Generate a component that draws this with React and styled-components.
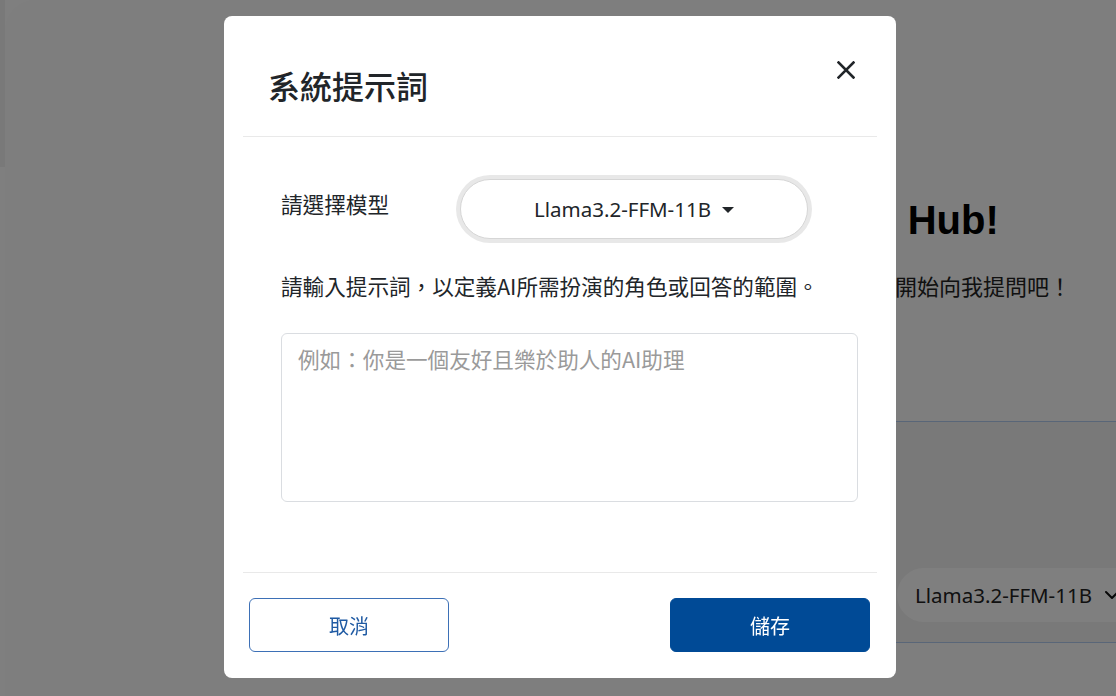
import React from "react";
import styled, { createGlobalStyle } from "styled-components";

const GlobalStyle = createGlobalStyle`
  html, body { margin: 0; padding: 0; }
  body {
    width: 1116px;
    height: 696px;
    overflow: hidden;
    background: #ffffff;
    font-family: "Noto Sans", "Noto Sans CJK TC", sans-serif;
    color: #212529;
  }
  * { box-sizing: border-box; }
`;

const cjk = `"Noto Sans CJK TC", "Noto Sans", sans-serif`;
const latin = `"Noto Sans", "Noto Sans CJK TC", sans-serif`;

/* ---------- background page ---------- */
const Page = styled.div`
  display: flex;
  width: 1116px;
  height: 696px;
  overflow: hidden;
  background: #ffffff;
`;

const SideStrip = styled.div`
  width: 5px;
  height: 167px;
  flex: none;
  background: #f3f3f3;
`;

const Main = styled.main`
  flex: 1;
  min-width: 0;
  display: flex;
  flex-direction: column;
  background: #fcfcfc;
  border-top-left-radius: 30px;
`;

const Welcome = styled.section`
  padding: 196px 0 0 521px;
  text-align: center;
`;

const WelcomeTitle = styled.h1`
  margin: 0;
  font-family: "Liberation Sans", ${cjk};
  font-size: 40px;
  line-height: 48px;
  font-weight: 700;
  color: #000;
  white-space: nowrap;
`;

const WelcomeText = styled.p`
  margin: 26px 0 0;
  padding-left: 38px;
  font-family: ${cjk};
  font-size: 22px;
  line-height: 30px;
  color: #222;
  white-space: nowrap;
`;

const Composer = styled.section`
  margin: 121px 0 0 300px;
  height: 222px;
  border-top: 1px solid #b3cdf0;
  border-bottom: 1px solid #b3cdf0;
  background: #f3f3f3;
  display: flex;
  align-items: flex-end;
  padding: 0 0 20px 592px;
`;

const ModelPill = styled.div`
  flex: none;
  height: 54px;
  width: 260px;
  border-radius: 27px;
  background: #ffffff;
  display: flex;
  align-items: center;
  gap: 12px;
  padding-left: 18px;
  font-family: ${latin};
  font-size: 20.5px;
  color: #222;
  white-space: nowrap;
`;

/* ---------- modal ---------- */
const Overlay = styled.div`
  position: fixed;
  inset: 0;
  background: rgba(0, 0, 0, 0.5);
  display: flex;
  justify-content: center;
  align-items: flex-start;
  padding: 16px 0 0 4px;
`;

const Dialog = styled.div`
  width: 672px;
  height: 662px;
  background: #fff;
  border-radius: 8px;
  display: flex;
  flex-direction: column;
  padding: 0 19px;
`;

const Header = styled.header`
  height: 121px;
  flex: none;
  display: flex;
  justify-content: space-between;
  align-items: flex-start;
  padding: 0 20px 0 25px;
  border-bottom: 1px solid #e9e9e9;
`;

const Title = styled.h2`
  margin: 49px 0 0;
  font-family: ${cjk};
  font-size: 32px;
  line-height: 40px;
  font-weight: 500;
  color: #212529;
`;

const CloseButton = styled.button`
  margin-top: 43px;
  width: 22px;
  height: 22px;
  padding: 0;
  border: 0;
  background: transparent;
  display: flex;
  align-items: center;
  justify-content: center;
  cursor: pointer;
`;

const Body = styled.div`
  flex: 1;
  padding: 42px 19px 0 38px;
  display: flex;
  flex-direction: column;
`;

const FieldRow = styled.div`
  display: flex;
  align-items: flex-start;
`;

const FieldLabel = styled.label`
  width: 179px;
  flex: none;
  margin-top: 10px;
  font-family: ${cjk};
  font-size: 21.6px;
  line-height: 30px;
  color: #212529;
`;

const SelectPill = styled.button`
  width: 348px;
  height: 60px;
  border-radius: 30px;
  border: 1px solid #d6d6d6;
  box-shadow: 0 0 0 4px #e8e8e8;
  background: #fff;
  display: flex;
  align-items: center;
  justify-content: center;
  gap: 11px;
  font-family: ${latin};
  font-size: 20.5px;
  color: #212529;
  cursor: pointer;
`;

const Caret = styled.span`
  width: 0;
  height: 0;
  border-left: 6.5px solid transparent;
  border-right: 6.5px solid transparent;
  border-top: 6px solid #212529;
  margin-top: 1px;
`;

const Description = styled.p`
  margin: 32px 0 0;
  font-family: ${cjk};
  font-size: 21.6px;
  line-height: 30px;
  color: #212529;
`;

const PromptArea = styled.textarea`
  margin-top: 32px;
  width: 100%;
  height: 169px;
  resize: none;
  border: 1px solid #dadde1;
  border-radius: 6px;
  padding: 10px 16px;
  font-family: ${cjk};
  font-size: 21.6px;
  line-height: 30px;
  color: #212529;
  outline: none;
  &::placeholder { color: #9a9a9a; }
`;

const Footer = styled.footer`
  flex: none;
  height: 106px;
  border-top: 1px solid #e9e9e9;
  display: flex;
  justify-content: space-between;
  align-items: flex-start;
  padding: 25px 7px 0 6px;
`;

const ActionButton = styled.button`
  width: 200px;
  height: 54px;
  border-radius: 6px;
  font-family: ${cjk};
  font-size: 20px;
  cursor: pointer;
  border: 1px solid ${(p) => (p.$primary ? "#004a96" : "#3d70b6")};
  background: ${(p) => (p.$primary ? "#004a96" : "#ffffff")};
  color: ${(p) => (p.$primary ? "#ffffff" : "#1f5aa3")};
`;

export default function App() {
  return (
    <>
      <GlobalStyle />
      <Page>
        <SideStrip />
        <Main>
          <Welcome>
            <WelcomeTitle>歡迎使用 FFM Hub!</WelcomeTitle>
            <WelcomeText>您好！有任何問題都歡迎隨時開始向我提問吧！</WelcomeText>
          </Welcome>
          <Composer>
            <ModelPill>
              Llama3.2-FFM-11B
              <svg width="16" height="10" viewBox="0 0 16 10" fill="none">
                <path d="M2 2l6 6 6-6" stroke="#111" strokeWidth="2" strokeLinecap="round" strokeLinejoin="round" />
              </svg>
            </ModelPill>
          </Composer>
        </Main>
      </Page>
      <Overlay>
        <Dialog>
          <Header>
            <Title>系統提示詞</Title>
            <CloseButton aria-label="close">
              <svg width="18" height="18" viewBox="0 0 18 18">
                <path d="M1.5 1.5l15 15M16.5 1.5l-15 15" stroke="#212529" strokeWidth="2.6" strokeLinecap="square" />
              </svg>
            </CloseButton>
          </Header>
          <Body>
            <FieldRow>
              <FieldLabel>請選擇模型</FieldLabel>
              <SelectPill>
                Llama3.2-FFM-11B
                <Caret />
              </SelectPill>
            </FieldRow>
            <Description>請輸入提示詞，以定義AI所需扮演的角色或回答的範圍。</Description>
            <PromptArea placeholder="例如：你是一個友好且樂於助人的AI助理" />
          </Body>
          <Footer>
            <ActionButton>取消</ActionButton>
            <ActionButton $primary>儲存</ActionButton>
          </Footer>
        </Dialog>
      </Overlay>
    </>
  );
}
